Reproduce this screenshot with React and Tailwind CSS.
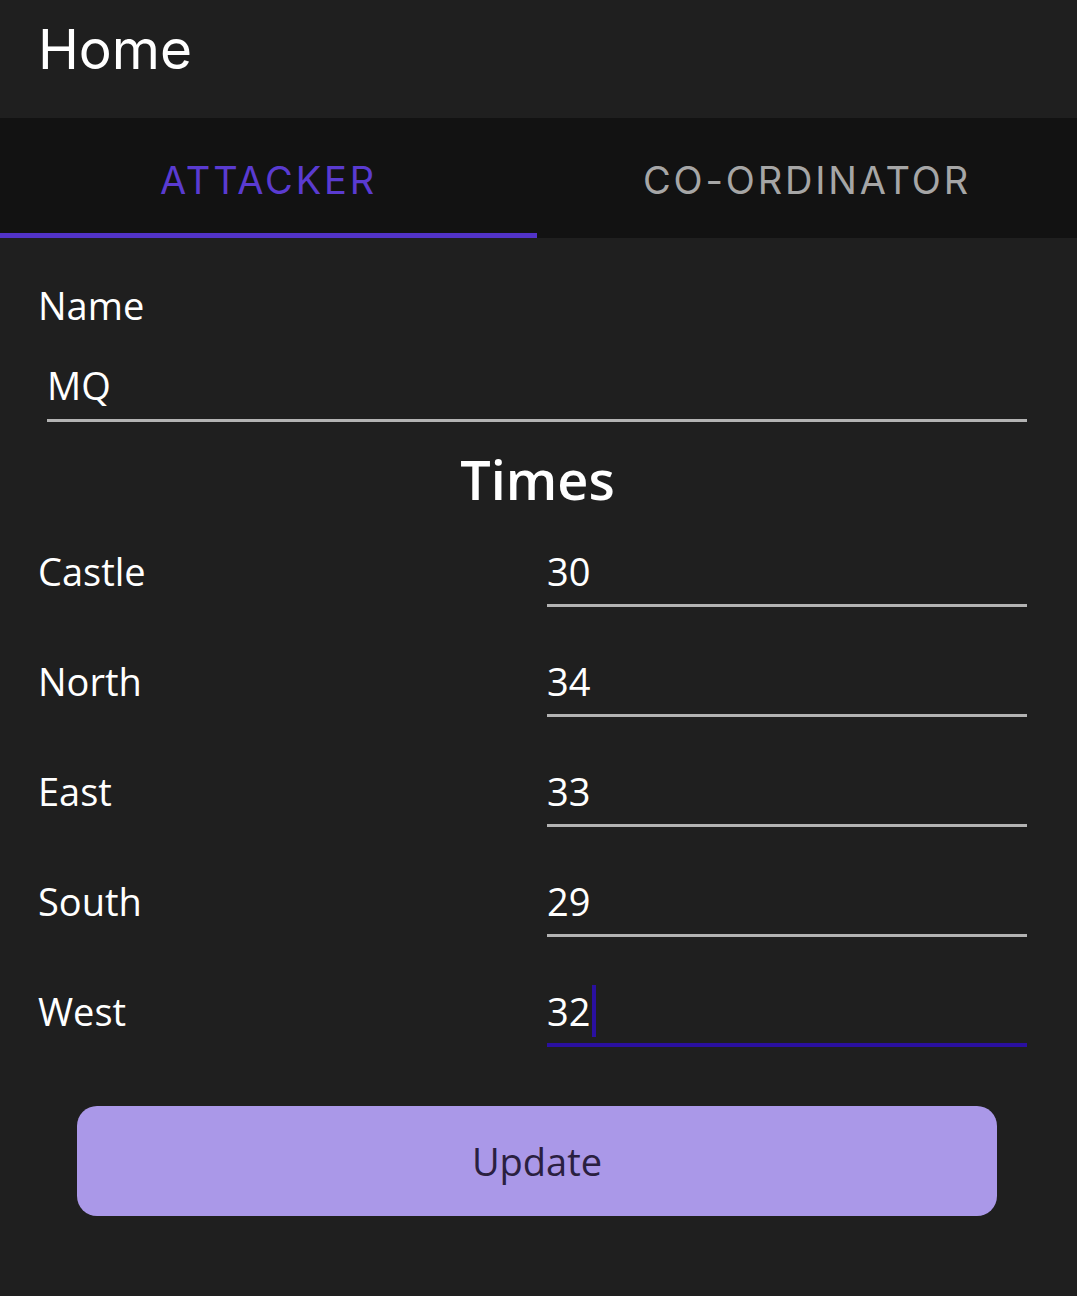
import React from 'react';

const rows = [
  { label: 'Castle', value: '30' },
  { label: 'North', value: '34' },
  { label: 'East', value: '33' },
  { label: 'South', value: '29' },
  { label: 'West', value: '32', focused: true },
];

const body = { fontFamily: '"Open Sans", "Noto Sans", sans-serif' };
const heading = { fontFamily: 'Inter, "DejaVu Sans", sans-serif' };

const App = () => {
  return (
    <div className="w-full min-h-[1296px] bg-[#1f1f1f] text-white" style={body}>
      <div className="h-[118px] pl-[38px] pt-[22px] bg-[#1f1f1f]">
        <h1 className="text-[55px] leading-none font-normal" style={heading}>
          Home
        </h1>
      </div>

      <div className="h-[120px] flex bg-[#121212]" style={heading}>
        <div className="w-[537px] flex items-center justify-center border-b-[5px] border-[#5233c8] pt-[9px]">
          <span className="text-[38px] font-normal tracking-[0.075em] text-[#5a3bd1]">ATTACKER</span>
        </div>
        <div className="flex-1 flex items-center justify-center pt-[4px]">
          <span className="text-[38px] font-normal tracking-[0.075em] text-[#a6a6a6]">CO-ORDINATOR</span>
        </div>
      </div>

      <div className="pl-[38px] pr-[50px] pt-[41px]">
        <label className="block text-[38px] leading-[52px]">Name</label>
        <div className="ml-[9px] mt-[28px] pb-[8px] border-b-[3px] border-[#b3b3b3] text-[38px] leading-[52px]">
          MQ
        </div>

        <h2 className="mt-[21px] pl-[10px] text-center text-[54px] leading-[72px] font-semibold">Times</h2>

        <div className="mt-[30px] flex flex-col gap-[48px]">
          {rows.map((row) => (
            <div key={row.label} className="flex">
              <div className="w-[509px] text-[38px] leading-[52px]">{row.label}</div>
              <div
                className={
                  row.focused
                    ? 'flex-1 pb-[6px] border-b-[4px] border-[#2a10a0] text-[38px] leading-[52px] flex items-center'
                    : 'flex-1 pb-[7px] border-b-[3px] border-[#b3b3b3] text-[38px] leading-[52px]'
                }
              >
                {row.value}
                {row.focused && <span className="ml-[2px] w-[4px] h-[52px] bg-[#2a10a0]" />}
              </div>
            </div>
          ))}
        </div>

        <div className="mt-[59px] pl-[39px] pr-[30px]">
          <button className="w-full h-[110px] rounded-[20px] bg-[#aa98e8] text-[#2a2040] text-[38px]">
            Update
          </button>
        </div>
      </div>
    </div>
  );
};

export default App;
